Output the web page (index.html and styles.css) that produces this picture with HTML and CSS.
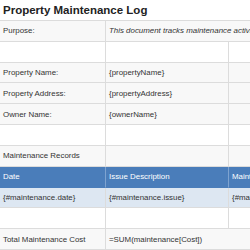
FILE: index.html
```html
<!DOCTYPE html>
<html>
<head>
<meta charset="utf-8">
<link rel="stylesheet" href="styles.css">
</head>
<body>
<table class="sheet">
  <colgroup>
    <col class="c1"><col class="c2"><col class="c3"><col class="c4">
  </colgroup>
  <tr class="title-row"><td colspan="4" class="title">Property Maintenance Log</td></tr>
  <tr class="label-row"><td>Purpose:</td><td colspan="3" class="desc">This document tracks maintenance activities and costs for the property.</td></tr>
  <tr class="blank"><td></td><td></td><td></td><td></td></tr>
  <tr class="label-row"><td>Property Name:</td><td>{propertyName}</td><td></td><td></td></tr>
  <tr class="label-row"><td>Property Address:</td><td>{propertyAddress}</td><td></td><td></td></tr>
  <tr class="label-row"><td>Owner Name:</td><td>{ownerName}</td><td></td><td></td></tr>
  <tr class="blank"><td></td><td></td><td></td><td></td></tr>
  <tr class="label-row"><td>Maintenance Records</td><td></td><td></td><td></td></tr>
  <tr class="head-row"><td>Date</td><td>Issue Description</td><td>Maintenance Cost</td><td>Status</td></tr>
  <tr class="data-row"><td>{#maintenance.date}</td><td>{#maintenance.issue}</td><td>{#maintenance.cost}</td><td>{/maintenance}</td></tr>
  <tr class="blank"><td></td><td></td><td></td><td></td></tr>
  <tr class="label-row"><td>Total Maintenance Cost</td><td colspan="3">=SUM(maintenance[Cost])</td></tr>
</table>
</body>
</html>
```
FILE: styles.css
```css
html, body {
  margin: 0;
  padding: 0;
  background: #ffffff;
  overflow: hidden;
}
.sheet {
  border-collapse: separate;
  border-spacing: 0;
  table-layout: fixed;
  width: 470px;
  font-family: "Liberation Sans", Arial, sans-serif;
  font-size: 7.9px;
  color: #333333;
}
.c1 { width: 106px; }
.c2 { width: 123px; }
.c3 { width: 120px; }
.c4 { width: 121px; }
.sheet td {
  height: 20.85px;
  box-sizing: border-box;
  padding: 0 3px;
  border-right: 1px solid #dcdcdc;
  border-bottom: 1px solid #dcdcdc;
  white-space: nowrap;
  overflow: hidden;
  vertical-align: middle;
}
.title-row td {
  font-size: 11.5px;
  font-weight: bold;
  color: #222222;
  background: #ffffff;
  padding-left: 3px;
  padding-top: 1px;
}
.label-row td {
  background: #f8f8f8;
}
.blank td {
  background: #ffffff;
}
.desc {
  font-style: italic;
}
.head-row td {
  background: #4a7dba;
  color: #ffffff;
  border-right-color: #7ea3d0;
  border-bottom-color: #4a7dba;
}
.data-row td {
  background: #dde7f2;
}
```
